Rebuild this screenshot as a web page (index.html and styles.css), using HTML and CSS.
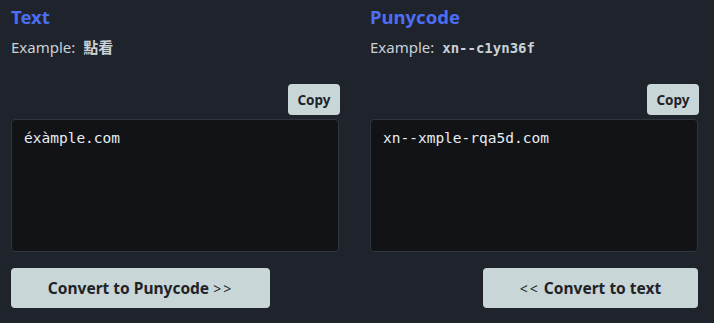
FILE: index.html
```html
<html lang="en">
<head>
<title>Punycode converter</title>
<meta name="viewport" content="width=device-width, initial-scale=1">
<link rel="stylesheet" href="styles.css">
</head>
<body>

<div class="converter">
  <div class="pane">
    <h2 class="title">Text</h2>
    <p class="example">Example: <span class="sample cjk">點看</span></p>
    <div class="tools"><button class="copy">Copy</button></div>
    <textarea class="box" spellcheck="false">éxàmple.com</textarea>
    <div class="actions">
      <button class="convert">Convert to Punycode <span class="arrow">&gt;&gt;</span></button>
    </div>
  </div>

  <div class="pane">
    <h2 class="title">Punycode</h2>
    <p class="example">Example: <span class="sample code">xn--c1yn36f</span></p>
    <div class="tools"><button class="copy">Copy</button></div>
    <textarea class="box" spellcheck="false">xn--xmple-rqa5d.com</textarea>
    <div class="actions right">
      <button class="convert wide"><span class="arrow">&lt;&lt;</span> Convert to text</button>
    </div>
  </div>
</div>

</body>
</html>
```

FILE: styles.css
```css
body {
  margin: 0;
  background-color: #1f232b;
  color: #c9d1d9;
  font-family: "Noto Sans", "Open Sans", sans-serif;
}

.converter {
  display: grid;
  grid-template-columns: 328px 328px;
  column-gap: 31px;
  padding: 4px 0 0 11px;
}

.pane {
  display: flex;
  flex-direction: column;
}

.title {
  margin: 0;
  height: 26px;
  color: #4c6ef5;
  font-size: 18.5px;
  font-weight: 700;
  line-height: 26px;
}

.example {
  margin: 7px 0 0 0;
  height: 20px;
  font-size: 15px;
  line-height: 20px;
  white-space: nowrap;
}

.sample {
  margin-left: 4px;
  font-weight: 700;
  line-height: 20px;
}

.cjk {
  font-family: "Noto Sans CJK TC", "Noto Sans CJK SC", sans-serif;
  font-size: 15px;
}

.code {
  font-family: "DejaVu Sans Mono", "Liberation Mono", monospace;
  font-size: 14px;
}

.tools {
  display: flex;
  justify-content: flex-end;
  margin-top: 27px;
  margin-right: -1px;
}

.copy {
  width: 52px;
  height: 31px;
  border: none;
  border-radius: 4px;
  background-color: #c8d6d7;
  color: #1f2328;
  font-family: "Noto Sans", "Open Sans", sans-serif;
  font-size: 13.5px;
  font-weight: 700;
  padding: 0;
}

.box {
  margin-top: 4px;
  height: 133px;
  box-sizing: border-box;
  resize: none;
  background-color: #111317;
  color: #e6edf3;
  border: 1px solid #30363d;
  border-radius: 4px;
  padding: 8px 12px;
  font-family: "DejaVu Sans Mono", "Liberation Mono", monospace;
  font-size: 14.5px;
  line-height: 20px;
  outline: none;
}

.actions {
  display: flex;
  margin-top: 16px;
}

.actions.right {
  justify-content: flex-end;
}

.convert {
  width: 259px;
  height: 40px;
  border: none;
  border-radius: 4px;
  background-color: #c8d6d7;
  color: #1f2328;
  font-family: "Noto Sans", "Open Sans", sans-serif;
  font-size: 15.5px;
  font-weight: 700;
  padding: 0;
}

.convert.wide {
  width: 215px;
}

.arrow {
  font-weight: 400;
  font-size: 14px;
  letter-spacing: 2px;
}
```
